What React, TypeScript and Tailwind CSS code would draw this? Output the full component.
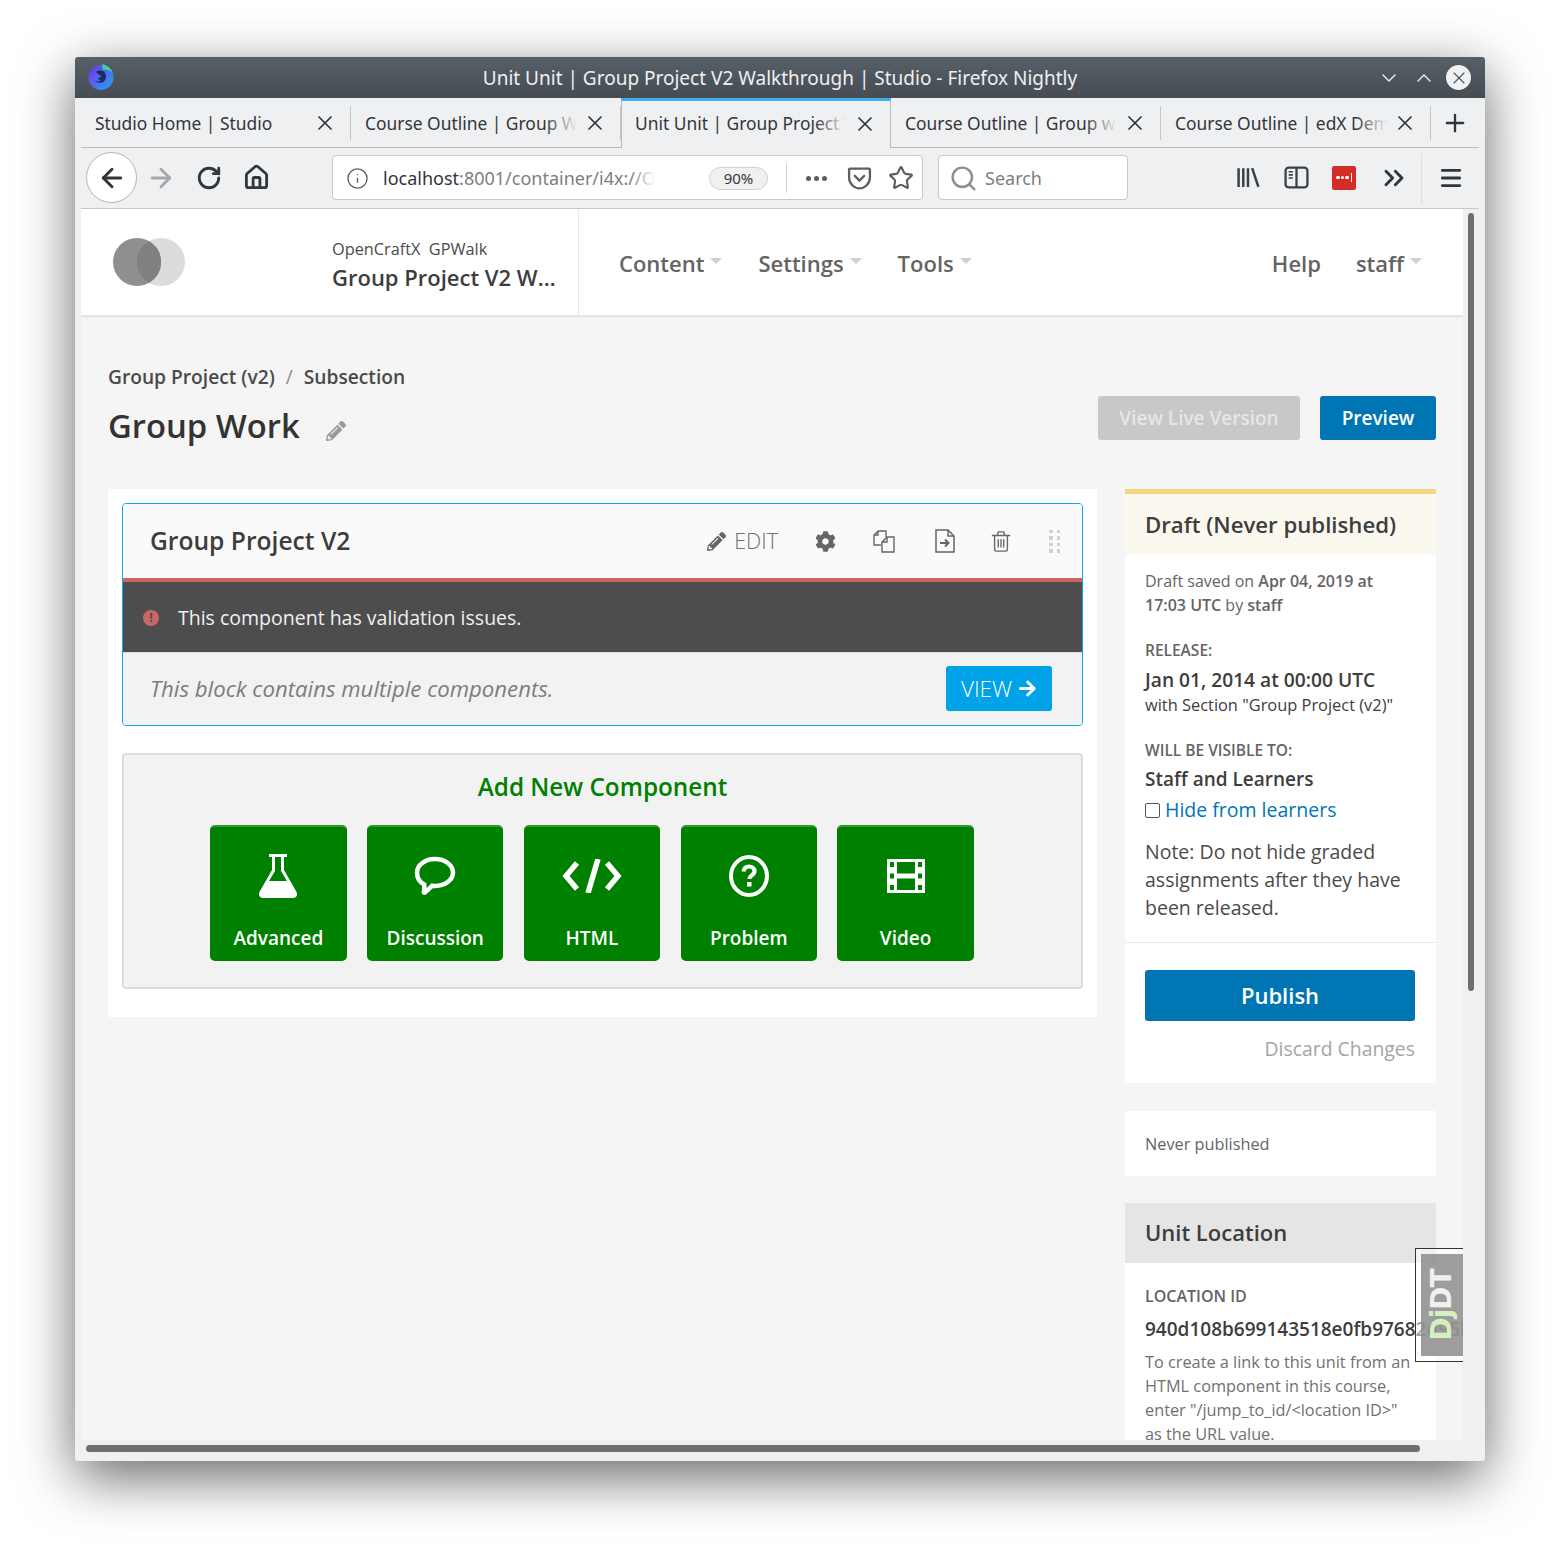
import React from "react";
import { ArrowLeft, ArrowRight, ChevronDown, ChevronUp, ChevronsRight, Home, Info, Menu, Plus, RotateCw, Search, Star, X } from "lucide-react";
import { FaArrowRight, FaCog, FaPencilAlt } from "react-icons/fa";

const tabs = [
  { title: "Studio Home | Studio" },
  { title: "Course Outline | Group Work: Peer Review" },
  { title: "Unit Unit | Group Project V2 Walkthrough", active: true },
  { title: "Course Outline | Group work: something" },
  { title: "Course Outline | edX Demonstration Course" },
];

const Caret = () => (
  <span className="ml-[6px] mt-[-4px] inline-block h-0 w-0 border-x-[6px] border-t-[6px] border-x-transparent border-t-[#cfcfcf]" />
);

const Flask = () => (
  <svg viewBox="0 0 40 44" className="h-[44px] w-[40px]" fill="#fff">
    <path d="M11 0h18v3h-3v13l12 21c2 3 1 7-3 7H5c-4 0-5-4-3-7l12-21V3h-3V0Zm6 3v14l-6 10h18l-6-10V3h-6Z" fillRule="evenodd" />
  </svg>
);

const Bubble = () => (
  <svg viewBox="0 0 42 40" className="h-[40px] w-[42px]" fill="none" stroke="#fff" strokeWidth="4.500">
    <path d="M21 3c10 0 18 6 18 13.500S31 30 21 30c-1 0-2 0-3-.2-2 2-4.500 5-7 6.700-.8.4-1.500-.2-1.200-1 .6-2 .7-4 .4-7C5.500 26 3 21.500 3 16.500 3 9 11 3 21 3Z" />
  </svg>
);

const Code = () => (
  <svg viewBox="0 0 60 34" className="h-[34px] w-[60px]" fill="none" stroke="#fff" strokeWidth="5.500">
    <path d="M15 4 4 17l11 13M45 4l11 13-11 13M36 0l-10 34" />
  </svg>
);

const Question = () => (
  <svg viewBox="0 0 40 42" className="h-[42px] w-[40px]" fill="none">
    <ellipse cx="20" cy="21" rx="18" ry="19" stroke="#fff" strokeWidth="4" />
    <path d="M14.500 16.500c.5-3 2.700-5 5.500-5 3 0 5.500 2 5.500 4.800 0 4-5.200 4-5.200 7.700" stroke="#fff" strokeWidth="4.200" />
    <rect x="18" y="27" width="4.500" height="4.500" fill="#fff" />
  </svg>
);

const Film = () => (
  <svg viewBox="0 0 38 34" className="h-[34px] w-[38px]" fill="#fff">
    <path
      fillRule="evenodd"
      d="M0 0h38v34H0V0Zm3 3v5h4V3H3Zm0 11.500v5h4v-5H3ZM3 26v5h4v-5H3ZM31 3v5h4V3h-4Zm0 11.500v5h4v-5h-4Zm0 11.500v5h4v-5h-4ZM10 3v11.500h18V3H10Zm0 16.500V31h18V19.500H10Z"
    />
  </svg>
);

const addButtons = [
  { label: "Advanced", icon: <Flask /> },
  { label: "Discussion", icon: <Bubble /> },
  { label: "HTML", icon: <Code /> },
  { label: "Problem", icon: <Question /> },
  { label: "Video", icon: <Film /> },
];

const BrowserChrome = () => (
  <>
    <div className="relative flex h-[41px] shrink-0 items-center justify-center rounded-t-[3px] bg-gradient-to-b from-[#576068] to-[#454c52] pt-[1px] text-[19px] text-[#eff0f1]">
      <svg viewBox="0 0 28 28" className="absolute left-[12px] top-[6px] h-[28px] w-[28px]">
        <defs>
          <linearGradient id="ffn" x1="0" y1="0" x2="1" y2="1">
            <stop offset="0" stopColor="#7a2ee8" />
            <stop offset="1" stopColor="#23a6f0" />
          </linearGradient>
        </defs>
        <circle cx="14" cy="14.500" r="12.500" fill="url(#ffn)" />
        <path d="M15 1c5 1 9 4 11 9-3-3-7-4-10-3l-1-6Z" fill="#3fd0a4" />
        <path d="M9 9c3-2 7-2 9 1 2 3 1 7-2 9-3 1-6 1-8-1 3 1 5 0 6-1-2 0-3-1-3-2 2 0 3-1 3-2-1-1-3-2-5-4Z" fill="#1c2a5c" />
      </svg>
      Unit Unit | Group Project V2 Walkthrough | Studio - Firefox Nightly
      <div className="absolute right-[14px] top-[8px] flex items-center gap-[11px]">
        <ChevronDown size={24} strokeWidth={1.4} className="text-[#eff0f1]" />
        <ChevronUp size={24} strokeWidth={1.4} className="mr-[-1px] text-[#eff0f1]" />
        <div className="flex h-[25px] w-[25px] items-center justify-center rounded-full bg-[#eff0f1]">
          <X size={20} strokeWidth={1.3} className="text-[#4d545a]" />
        </div>
      </div>
    </div>
    <div className="mx-[6px] flex h-[50px] shrink-0 text-[17.400px] text-[#31363b]">
      {tabs.map((tab) => (
        <div
          key={tab.title}
          className={
            tab.active
              ? "flex w-[270px] items-center border-x border-[#b8babc] border-t-[3px] border-t-[#3daee9] pb-[2px] pl-[13px]"
              : "flex w-[270px] items-center border-b border-[#b8babc] pl-[14px] pt-[1px]"
          }
        >
          <div className="relative w-[212px] shrink-0 overflow-hidden whitespace-nowrap">
            {tab.title}
            <span className="absolute right-0 top-0 h-full w-[32px] bg-gradient-to-r from-transparent to-[#eff0f1]" />
          </div>
          <X size={24} strokeWidth={1.7} className="ml-[6px] shrink-0" />
          {!tab.active && <span className="ml-auto h-[34px] w-px shrink-0 bg-[#c4c6c8]" />}
        </div>
      ))}
      <div className="flex grow items-center border-b border-[#b8babc] pl-[10px]">
        <Plus size={28} strokeWidth={2} />
      </div>
    </div>
    <div className="mx-[6px] flex h-[61px] shrink-0 items-center border-b border-[#c8c8c8] px-[5px] pb-[1px] text-[#31363b]">
      <div className="flex h-[51px] w-[51px] items-center justify-center rounded-full border border-[#b2b4b6] bg-white">
        <ArrowLeft size={30} strokeWidth={2.300} />
      </div>
      <ArrowRight size={30} strokeWidth={2.300} className="ml-[9px] text-[#a5a8ab]" />
      <RotateCw size={26} strokeWidth={2.600} className="ml-[20px]" />
      <Home size={27} strokeWidth={2.500} className="ml-[21px]" />
      <div className="ml-[62px] flex h-[45px] w-[591px] items-center rounded-[4px] border border-[#c8c8c8] bg-white pl-[13px] pr-[8px] pt-[1px] text-[18px]">
        <Info size={23} strokeWidth={1.4} className="text-[#5a5f64]" />
        <div className="relative ml-[14px] w-[272px] overflow-hidden whitespace-nowrap text-[#7c7f82]">
          <span className="text-[#31363b]">localhost</span>:8001/container/i4x://OpenCraftX/GPWalk
          <span className="absolute right-0 top-0 h-full w-[24px] bg-gradient-to-r from-transparent to-white" />
        </div>
        <span className="ml-[54px] flex h-[23px] w-[59px] items-center justify-center rounded-full border border-[#cfd0d1] bg-[#f0f0f0] text-[15px]">90%</span>
        <span className="ml-[18px] h-[30px] w-px bg-[#d2d3d4]" />
        <div className="ml-[19px] flex gap-[3px]">
          <span className="h-[5px] w-[5px] rounded-full bg-[#5a5f64]" />
          <span className="h-[5px] w-[5px] rounded-full bg-[#5a5f64]" />
          <span className="h-[5px] w-[5px] rounded-full bg-[#5a5f64]" />
        </div>
        <svg viewBox="0 0 24 24" className="ml-[20px] h-[25px] w-[25px]" fill="none" stroke="#5a5f64" strokeWidth="2.200">
          <path d="M3 2.500h18a1 1 0 0 1 1 1V11c0 6-5 10.500-10 10.500S2 17 2 11V3.500a1 1 0 0 1 1-1Z" />
          <path d="M7.500 9.500 12 14l4.500-4.500" strokeLinecap="round" />
        </svg>
        <Star size={26} strokeWidth={2} className="ml-[16px] text-[#5a5f64]" />
      </div>
      <div className="ml-[15px] flex h-[45px] w-[190px] items-center rounded-[4px] border border-[#c8c8c8] bg-white pl-[10px] pt-[1px] text-[18px] text-[#7c7f82]">
        <Search size={29} strokeWidth={2} className="text-[#8b8e91]" />
        <span className="ml-[7px]">Search</span>
      </div>
      <svg viewBox="0 0 24 24" className="ml-[108px] h-[25px] w-[25px]" fill="none" stroke="#3b4045" strokeWidth="2.400">
        <path d="M2.500 3v18M7 3v18M11.500 3v18M15.500 3l6 18" />
      </svg>
      <svg viewBox="0 0 24 24" className="ml-[23px] h-[25px] w-[25px]" fill="none" stroke="#3b4045" strokeWidth="2.200">
        <rect x="1.500" y="2.500" width="21" height="19" rx="3" />
        <path d="M12 2.500v19" />
        <path d="M4.500 6.500h4M4.500 9.500h4M4.500 12.500h4" strokeWidth="1.500" />
      </svg>
      <div className="ml-[23px] flex h-[24px] w-[24px] items-center justify-center gap-[1px] rounded-[2px] bg-[#d32d27]">
        <span className="h-[3.500px] w-[3.500px] rounded-full bg-white" />
        <span className="h-[3.500px] w-[3.500px] rounded-full bg-white" />
        <span className="h-[3.500px] w-[3.500px] rounded-full bg-white" />
        <span className="ml-[1px] h-[9px] w-px bg-white" />
      </div>
      <ChevronsRight size={32} strokeWidth={2.200} className="ml-[22px]" />
      <span className="ml-[11px] h-[50px] w-px bg-[#dcdde0]" />
      <Menu size={26} strokeWidth={2.600} className="ml-[16px]" />
    </div>
  </>
);

const Sidebar = () => (
  <aside className="w-[311px] shrink-0 text-[#646464]">
    <div className="border-t-[5px] border-[#f6d57f] bg-white">
      <h2 className="flex h-[61px] items-center bg-[#fbf8ef] pl-[20px] text-[22.200px] font-semibold text-[#3d3d3d]">Draft (Never published)</h2>
      <div className="border-b border-[#e8e8e8] px-[20px] pb-[20px] pt-[14px]">
        <p className="text-[16px] leading-[24px]">
          Draft saved on <span className="font-semibold">Apr 04, 2019 at 17:03 UTC</span> by <span className="font-semibold">staff</span>
        </p>
        <p className="mt-[21px] text-[15.500px] font-semibold leading-[24px]">RELEASE:</p>
        <p className="mt-[4px] whitespace-nowrap text-[19.200px] font-semibold leading-[27px] text-[#3d3d3d]">Jan 01, 2014 at 00:00 UTC</p>
        <p className="text-[16.400px] leading-[24px] text-[#3d3d3d]">with Section "Group Project (v2)"</p>
        <p className="mt-[21px] text-[15.500px] font-semibold leading-[24px]">WILL BE VISIBLE TO:</p>
        <p className="mt-[4px] text-[19px] font-semibold leading-[27px] text-[#3d3d3d]">Staff and Learners</p>
        <label className="mt-[2px] flex items-center text-[19.500px] leading-[30px] text-[#0075b4]">
          <span className="mr-[5px] h-[15px] w-[15px] rounded-[2px] border border-[#555] bg-white" />
          Hide from learners
        </label>
        <p className="mt-[13px] text-[19.500px] leading-[28px] text-[#4a4a4a]">Note: Do not hide graded assignments after they have been released.</p>
      </div>
      <div className="pb-[21px] pl-[20px] pr-[21px] pt-[27px]">
        <button className="h-[51px] w-full rounded-[3px] bg-[#0075b4] text-[22px] font-semibold text-white">Publish</button>
        <p className="mt-[14px] text-right text-[19.400px] leading-[27px] text-[#a5a5a5]">Discard Changes</p>
      </div>
    </div>
    <div className="mt-[28px] flex h-[65px] items-center bg-white pl-[20px] pt-[2px] text-[16.300px]">Never published</div>
    <div className="mt-[27px] bg-white">
      <h3 className="flex h-[60px] items-center bg-[#e5e5e5] pb-[1px] pl-[20px] text-[22px] font-semibold text-[#3d3d3d]">Unit Location</h3>
      <div className="px-[20px] pt-[21px]">
        <p className="text-[16px] font-semibold leading-[24px]">LOCATION ID</p>
        <p className="mt-[8px] whitespace-nowrap text-[19px] font-semibold leading-[27px] text-[#3d3d3d]">940d108b699143518e0fb97682d95b47</p>
        <p className="mt-[7px] w-[272px] text-[16.300px] leading-[24px] text-[#707070]">
          To create a link to this unit from an HTML component in this course, enter "/jump_to_id/&lt;location ID&gt;" as the URL value.
        </p>
      </div>
    </div>
  </aside>
);

const Page = () => (
  <div className="relative h-[1231px] w-[1382px] shrink-0 overflow-hidden bg-[#f5f5f5] font-['Open_Sans',sans-serif]">
    <header className="flex h-[107px] border-b border-[#e4e4e4] bg-white shadow-[0_1px_2px_rgba(0,0,0,0.08)]">
      <div className="flex w-[498px] border-r border-[#e9e9e9] pl-[32px] pt-[28px]">
        <svg viewBox="0 0 72 50" className="h-[50px] w-[72px] shrink-0">
          <circle cx="48" cy="25" r="24" fill="#dcdcdc" />
          <circle cx="24" cy="25" r="24" fill="#8f8f8f" />
          <path d="M36 4.200a24 24 0 0 1 0 41.600 24 24 0 0 1 0-41.600Z" fill="#808080" />
        </svg>
        <div className="ml-[147px] min-w-0">
          <p className="whitespace-pre text-[16.300px] leading-[24px] text-[#4a4a4a]">OpenCraftX  GPWalk</p>
          <p className="mt-[1px] w-[226px] truncate text-[22px] font-semibold leading-[30px] text-[#3d3d3d]">Group Project V2 Walkthrough</p>
        </div>
      </div>
      <nav className="flex grow items-center justify-between pl-[40px] pr-[41px] pt-[2px] text-[22px] font-semibold text-[#646464]">
        <div className="flex gap-[36px]">
          <span className="flex items-center">Content<Caret /></span>
          <span className="flex items-center">Settings<Caret /></span>
          <span className="flex items-center">Tools<Caret /></span>
        </div>
        <div className="flex gap-[35px]">
          <span>Help</span>
          <span className="flex items-center">staff<Caret /></span>
        </div>
      </nav>
    </header>
    <div className="flex items-start justify-between pl-[27px] pr-[27px] pt-[47px]">
      <div>
        <p className="text-[19.200px] font-semibold leading-[27px] text-[#4a4a4a]">
          Group Project (v2) <span className="mx-[6px] font-normal text-[#8c8c8c]">/</span> Subsection
        </p>
        <h1 className="mt-[13px] flex items-center text-[32.800px] font-semibold leading-[46px] text-[#333]">
          Group Work
          <FaPencilAlt className="ml-[26px] mt-[9px] h-[20px] w-[20px] text-[#9a9a9a]" />
        </h1>
      </div>
      <div className="mt-[33px] flex gap-[20px] text-[19px] font-semibold">
        <button className="h-[44px] w-[202px] rounded-[3px] bg-[#c8c8c8] pt-[1px] text-[#e6e6e6]">View Live Version</button>
        <button className="h-[44px] w-[116px] rounded-[3px] bg-[#0075b4] pt-[1px] text-white">Preview</button>
      </div>
    </div>
    <div className="mt-[40px] flex items-start gap-[28px] pl-[27px]">
      <main className="h-[528px] w-[989px] shrink-0 bg-white p-[14px]">
        <section className="overflow-hidden rounded-[4px] border border-[#0ea7ec]">
          <div className="flex h-[74px] items-center justify-between bg-[#fafafa] pl-[27px] pr-[22px]">
            <h3 className="text-[24.600px] font-semibold text-[#3d3d3d]">Group Project V2</h3>
            <div className="flex items-center text-[#666]">
              <FaPencilAlt className="h-[19px] w-[19px]" />
              <span className="ml-[8px] text-[21.500px] font-light text-[#707070]">EDIT</span>
              <FaCog className="ml-[37px] h-[21px] w-[21px]" />
              <svg viewBox="0 0 24 24" className="ml-[36px] h-[24px] w-[24px]" fill="none" stroke="#666" strokeWidth="1.400">
                <path d="M6 2 2 6v10h7M6 2v4H2M6 2h8v6" />
                <path d="M15 8h7v15H10V13l5-5Zm0 0v5h-5" />
              </svg>
              <svg viewBox="0 0 24 24" className="ml-[37px] h-[24px] w-[24px]" fill="none" stroke="#666" strokeWidth="1.500">
                <path d="M3 1h12l6 6v16H3V1Z" />
                <path d="M15 1v6h6" />
                <path d="M7 14h8M12 10.500l3.500 3.500-3.500 3.500" strokeWidth="2" />
              </svg>
              <svg viewBox="0 0 24 24" className="ml-[33px] h-[22px] w-[22px]" fill="none" stroke="#666" strokeWidth="1.500">
                <path d="M2 6h20M5 6v15a2 2 0 0 0 2 2h10a2 2 0 0 0 2-2V6M8 6l1-4h6l1 4M9 10v9M12 10v9M15 10v9" />
              </svg>
              <div className="ml-[37px] grid grid-cols-2 gap-x-[4px] gap-y-[3px]">
                {Array.from({ length: 8 }).map((_, i) => (
                  <span key={i} className="h-[3.500px] w-[3.500px] bg-[#cfd0d6]" />
                ))}
              </div>
            </div>
          </div>
          <div className="flex h-[75px] items-center border-b border-[#dcdcdc] border-t-[4px] border-t-[#cb6666] bg-[#4d4d4d] pl-[20px] pt-[1px] text-[19.500px] text-[#f0f0f0]">
            <span className="flex h-[16px] w-[16px] items-center justify-center rounded-full bg-[#cb6666] text-[12px] font-bold leading-none text-[#4d4d4d]">!</span>
            <span className="ml-[19px]">This component has validation issues.</span>
          </div>
          <div className="flex h-[72px] items-center justify-between bg-[#f2f2f2] pb-[1px] pl-[27px] pr-[30px]">
            <p className="text-[22.200px] italic text-[#7d7d7d]">This block contains multiple components.</p>
            <button className="flex h-[45px] w-[106px] items-center justify-center gap-[6px] rounded-[3px] bg-[#00a2e8] text-[22.500px] font-light text-white">
              VIEW
              <FaArrowRight className="h-[19px] w-[19px]" />
            </button>
          </div>
        </section>
        <section className="mt-[27px] h-[236px] rounded-[4px] border-2 border-[#dcdcdc] bg-[#f2f2f2]">
          <h4 className="pt-[13px] text-center text-[24.300px] font-semibold leading-[37px] text-[#008000]">Add New Component</h4>
          <div className="mt-[20px] flex justify-center gap-[20.300px] pr-[21px]">
            {addButtons.map((btn) => (
              <div key={btn.label} className="flex h-[136px] w-[136.500px] flex-col items-center rounded-[5px] border-t-2 border-[#2f9a2f] bg-[#008000] text-white">
                <div className="flex h-[96px] items-center justify-center pt-[2px]">{btn.icon}</div>
                <span className="pt-[2px] text-[19px] font-semibold leading-[27px]">{btn.label}</span>
              </div>
            ))}
          </div>
        </section>
      </main>
      <Sidebar />
    </div>
    <div className="absolute right-0 top-[1039px] flex h-[114px] w-[48px] items-center justify-end border border-r-0 border-[#333] bg-white/50 pb-[6px] pt-[5px]">
      <div className="flex h-[102px] w-[42px] items-center justify-center bg-[#8c8c8c]/85">
        <span className="-rotate-90 whitespace-nowrap font-['DejaVu_Sans',sans-serif] text-[28px] font-bold leading-none tracking-[-1px] text-white/85">
          <span className="text-[#d5f0c0]">Dj</span>DT
        </span>
      </div>
    </div>
  </div>
);

export default function App() {
  return (
    <div className="min-h-[1554px] overflow-hidden bg-white pl-[75px] pt-[57px] font-['Noto_Sans',sans-serif]">
      <div className="flex h-[1404px] w-[1410px] flex-col rounded-[3px] bg-[#eff0f1] shadow-[0_16px_55px_rgba(0,0,0,0.6)]">
        <BrowserChrome />
        <div className="flex px-[6px]">
          <Page />
          <div className="flex grow justify-center pr-[1px] pt-[4px]">
            <div className="h-[778px] w-[6px] rounded-full bg-[#6d6e70]" />
          </div>
        </div>
        <div className="px-[11px] pt-[5px]">
          <div className="h-[7px] w-[1334px] rounded-full bg-[#6d6e70]" />
        </div>
      </div>
    </div>
  );
}
